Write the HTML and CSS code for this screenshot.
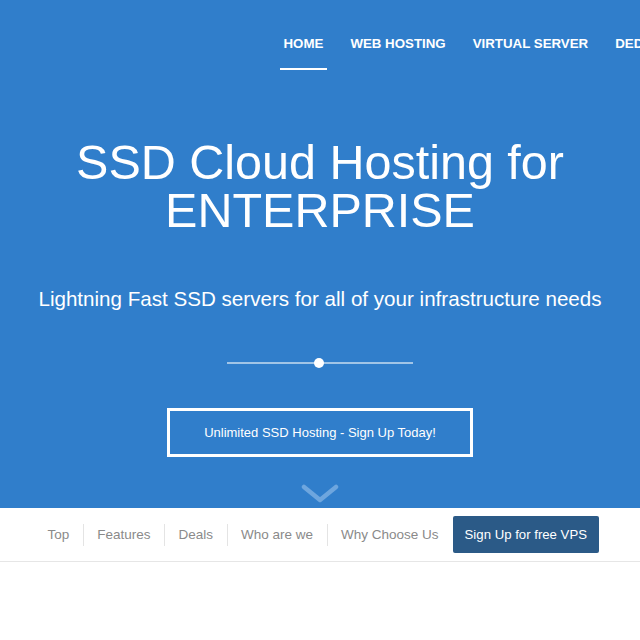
FILE: index.html
```html
<!DOCTYPE html>
<html lang="en">
<head>
<meta charset="utf-8">
<title>SSD Cloud Hosting</title>
<link rel="stylesheet" href="styles.css">
</head>
<body>
<header class="hero">
  <nav class="topnav">
    <a class="topnav-item active" href="#">HOME</a>
    <a class="topnav-item" href="#">WEB HOSTING</a>
    <a class="topnav-item" href="#">VIRTUAL SERVER</a>
    <a class="topnav-item" href="#">DEDICATED</a>
  </nav>
  <h1 class="hero-title">SSD Cloud Hosting for<br>ENTERPRISE</h1>
  <p class="hero-sub">Lightning Fast SSD servers for all of your infrastructure needs</p>
  <div class="divider"><span class="divider-dot"></span></div>
  <a class="hero-btn" href="#">Unlimited SSD Hosting - Sign Up Today!</a>
  <svg class="chevron" width="38" height="20" viewBox="0 0 38 20"><path d="M3 3 L19 16 L35 3" fill="none" stroke="#6ea6de" stroke-width="4.5" stroke-linecap="round" stroke-linejoin="round"/></svg>
</header>
<nav class="subnav">
  <a class="subnav-item" href="#">Top</a>
  <a class="subnav-item" href="#">Features</a>
  <a class="subnav-item" href="#">Deals</a>
  <a class="subnav-item" href="#">Who are we</a>
  <a class="subnav-item" href="#">Why Choose Us</a>
  <a class="subnav-cta" href="#">Sign Up for free VPS</a>
</nav>
</body>
</html>
```
FILE: styles.css
```css
html, body {
  margin: 0;
  padding: 0;
  background: #ffffff;
  font-family: "Liberation Sans", Arial, sans-serif;
  overflow: hidden;
}
a { text-decoration: none; }

.hero {
  background: #307ecb;
  height: 508px;
  display: flex;
  flex-direction: column;
  align-items: center;
  color: #ffffff;
}

.topnav {
  align-self: stretch;
  display: flex;
  padding-left: 270px;
  white-space: nowrap;
  overflow: hidden;
  height: 71px;
}
.topnav-item {
  color: #ffffff;
  font-weight: bold;
  font-size: 13.3px;
  padding: 36px 13.5px 0;
  position: relative;
  flex: none;
}
.topnav-item.active::after {
  content: "";
  position: absolute;
  left: 10px;
  right: 10px;
  bottom: 1px;
  height: 2px;
  background: #ffffff;
}

.hero-title {
  margin: 67px 0 0;
  font-weight: normal;
  font-size: 48.5px;
  line-height: 48px;
  text-align: center;
}
.hero-sub {
  margin: 53px 0 0;
  font-size: 20.6px;
  line-height: 24px;
}

.divider {
  margin-top: 51px;
  width: 186px;
  height: 2px;
  background: rgba(255,255,255,0.55);
  position: relative;
}
.divider-dot {
  position: absolute;
  left: 87px;
  top: -4px;
  width: 10px;
  height: 10px;
  border-radius: 50%;
  background: #ffffff;
}

.hero-btn {
  margin-top: 44px;
  width: 300px;
  height: 43px;
  border: 3px solid #ffffff;
  display: flex;
  align-items: center;
  justify-content: center;
  color: #ffffff;
  font-size: 13px;
}
.chevron {
  margin-top: 27px;
}

.subnav {
  display: flex;
  justify-content: flex-end;
  align-items: center;
  padding: 8px 41px 8px 0;
  border-bottom: 1px solid #e6e6e6;
}
.subnav-item {
  color: #8a8a8a;
  font-size: 13.5px;
  padding: 0 13.5px;
  line-height: 22px;
  border-left: 1px solid #e4e4e4;
}
.subnav-item:first-child { border-left: none; }
.subnav-item:nth-child(5) { padding-right: 14px; }
.subnav-cta {
  background: #2b5a87;
  color: #ffffff;
  font-size: 13.2px;
  height: 37px;
  padding: 0 12px;
  display: flex;
  align-items: center;
  border-radius: 2px;
}
```
